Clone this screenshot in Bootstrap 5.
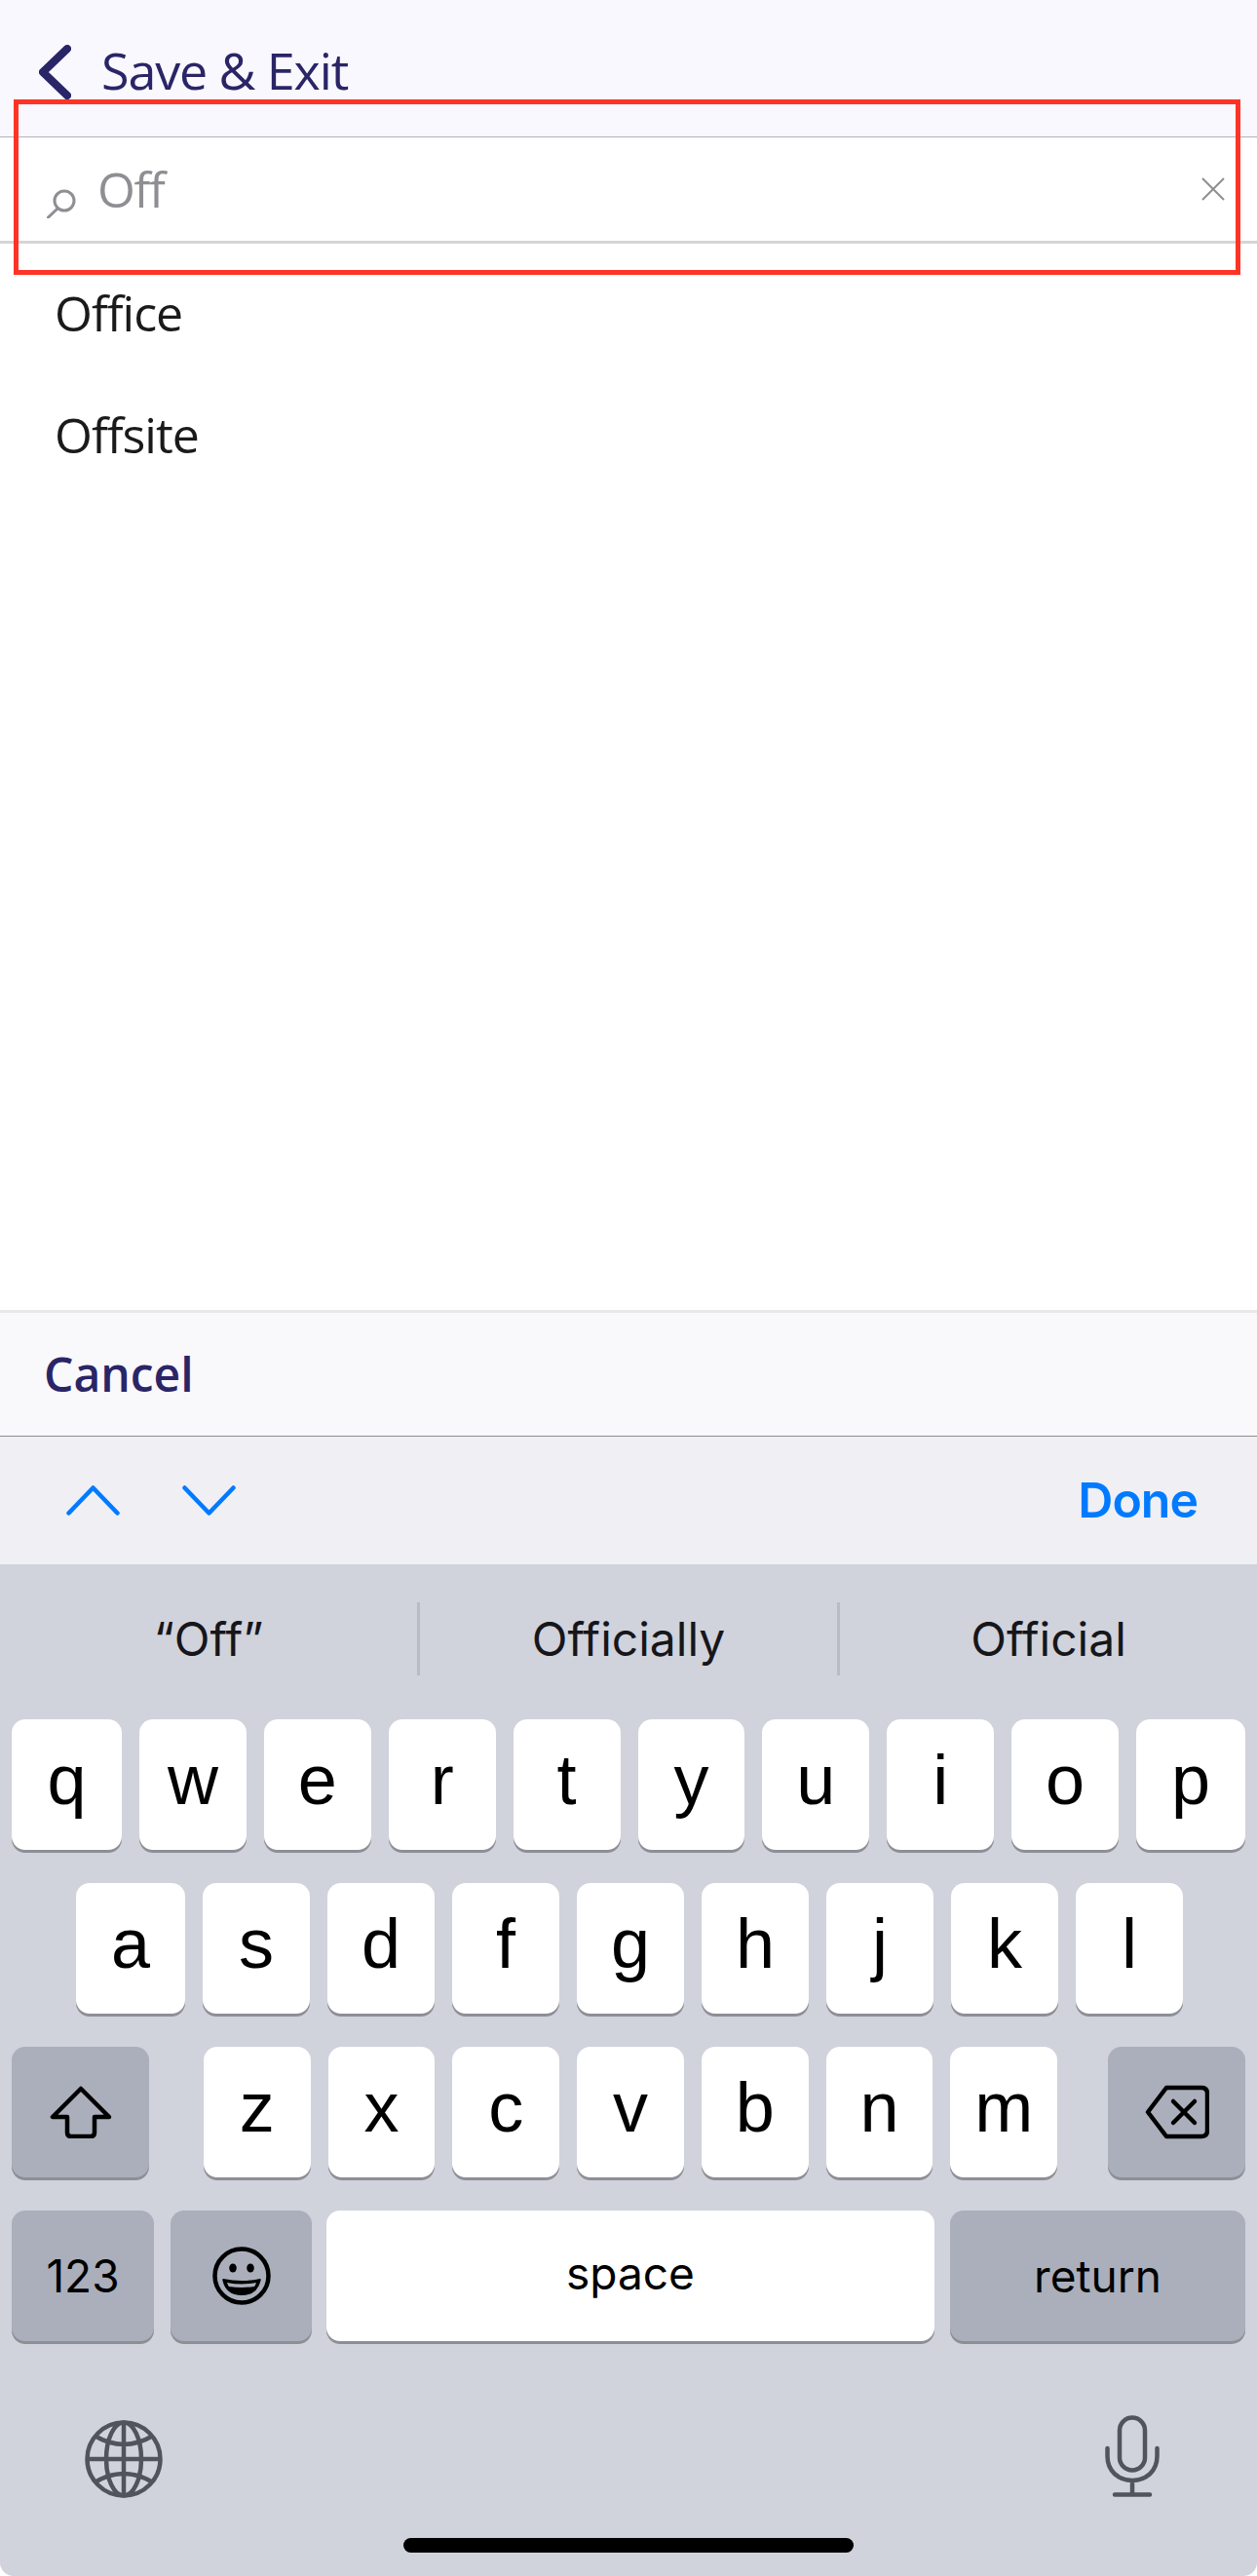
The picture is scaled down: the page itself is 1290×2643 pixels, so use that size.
<!DOCTYPE html>
<html lang="en">
  <head>
    <meta charset="UTF-8" />
    <meta name="viewport" content="width=device-width, initial-scale=1.0" />
    <title>Save &amp; Exit</title>
    <link href="https://cdn.jsdelivr.net/npm/bootstrap@5.3.0/dist/css/bootstrap.min.css" rel="stylesheet" />
    <style>
      body {
        width: 1290px;
        height: 2643px;
        background-color: #fff;
        font-family: "Open Sans", sans-serif;
        overflow: hidden;
      }
      .screen { height: 2643px; }
      .top-bar {
        height: 141px;
        padding: 46px 0 0 40px;
        background-color: #f8f8fe;
        border-bottom: 1px solid #b3b3b8;
        color: #2a2566;
      }
      .top-title { font-size: 52px; line-height: 52px; letter-spacing: -1.1px; margin-left: 31px; }
      .search-row {
        height: 109px;
        padding: 0 33px 0 48px;
        border-bottom: 3px solid #d5d5d5;
      }
      .search-text { font-size: 50px; line-height: 60px; letter-spacing: -1.3px; color: #8e8e93; margin-left: 22px; }
      .search-glass { margin-top: 30px; }
      .result-list { padding-top: 36px; }
      .result-item {
        border: 0;
        padding: 0 0 0 56px;
        height: 125px;
        font-size: 50px;
        line-height: 70px;
        letter-spacing: -1px;
        color: #1a1a1a;
      }
      .cancel-bar {
        height: 130px;
        background-color: #f9f8fb;
        border-top: 3px solid #e9e9e9;
        border-bottom: 1px solid #8e8e8e;
        padding-left: 45px;
      }
      .cancel-text { font-size: 48px; font-weight: 600; color: #2a2566; }
      .tool-bar {
        height: 131px;
        background-color: #efeff4;
        padding: 0 61px 0 68px;
      }
      .tool-arrows { gap: 64px; }
      .done-text { font-family: Inter, sans-serif; font-size: 50px; letter-spacing: -1px; font-weight: 600; color: #007aff; }
      .keyboard {
        height: 1038px;
        background-color: #d0d2dc;
        border-radius: 0 0 14px 14px;
        font-family: Inter, sans-serif;
        color: #000;
      }
      .suggest-bar { height: 159px; padding: 39px 0 45px; }
      .suggest-cell { flex: 1 1 0; font-size: 48px; line-height: 75px; color: #16161a; text-align: center; }
      .suggest-rule { width: 3px; background-color: #b9bcc6; }
      .key-rows { gap: 31px; padding: 0 12px; }
      .key-row { gap: 18px; height: 137px; }
      .key-row-inset { padding: 0 64px 0 66px; }
      .kb-key {
        flex: 1 1 0;
        height: 134px;
        border-radius: 14px;
        background-color: #fff;
        box-shadow: 0 3px 0 #8e8e96;
        font-family: "Liberation Sans", sans-serif;
        font-size: 72px;
        line-height: 1;
        padding-bottom: 10px;
      }
      .kb-key-dark { background-color: #aaafbb; }
      .key-first { flex: 0 0 113px; }
      .key-last { flex: 0 0 112px; }
      .key-first-inset { flex: 0 0 112px; }
      .key-wide { flex: 0 0 141px; }
      .key-letters { gap: 18px; padding: 0 34px 0 38px; }
      .key-word { font-family: Inter, sans-serif; font-size: 46px; padding-bottom: 0; }
      .key-num { flex: 0 0 146px; }
      .key-emoji { flex: 0 0 145px; margin: 0 -3px 0 -1px; }
      .key-space { flex: 1 1 0; padding-bottom: 6px; }
      .key-return { flex: 0 0 303px; margin-left: -2px; }
      .kb-bottom { height: 84px; padding: 0 100px 0 87px; margin-top: 73px; }
      .globe-icon { margin-top: 6px; }
      .home-bar {
        width: 462px;
        height: 15px;
        margin: 42px auto 0;
        border-radius: 8px;
        background-color: #000;
      }
      .red-box {
        position: absolute;
        left: 14px;
        top: 102px;
        width: 1259px;
        height: 180px;
        border: 5px solid #ff3426;
        pointer-events: none;
      }
    </style>
  </head>
  <body>
    <div class="screen position-relative d-flex flex-column">
      <div class="top-bar d-flex align-items-start">
        <svg width="33" height="56" viewBox="0 0 33 56" fill="none" stroke="#2a2566" stroke-width="8" stroke-linecap="round" stroke-linejoin="round">
          <path d="M29 4 4 28l25 24" />
        </svg>
        <div class="top-title">Save &amp; Exit</div>
      </div>

      <div class="search-row d-flex align-items-center">
        <svg class="search-glass" width="30" height="30" viewBox="0 0 30 30" fill="none" stroke="#8e8e93" stroke-width="3">
          <circle cx="18" cy="12" r="10" />
          <path d="M11 20 1.500 29" stroke-linecap="round" />
        </svg>
        <span class="search-text flex-grow-1">Off</span>
        <svg width="24" height="24" viewBox="0 0 24 24" fill="none" stroke="#8e8e93" stroke-width="2">
          <path d="M1 1l22 22M23 1 1 23" />
        </svg>
      </div>

      <ul class="list-group list-group-flush result-list flex-grow-1">
        <li class="list-group-item result-item">Office</li>
        <li class="list-group-item result-item">Offsite</li>
      </ul>

      <div class="cancel-bar d-flex align-items-center">
        <span class="cancel-text">Cancel</span>
      </div>

      <div class="tool-bar d-flex align-items-center justify-content-between">
        <div class="tool-arrows d-flex align-items-center">
          <svg width="55" height="31" viewBox="0 0 55 31" fill="none" stroke="#007aff" stroke-width="4.500" stroke-linecap="round" stroke-linejoin="round">
            <path d="M2.500 28.500 27.500 2.500l25 26" />
          </svg>
          <svg width="55" height="31" viewBox="0 0 55 31" fill="none" stroke="#007aff" stroke-width="4.500" stroke-linecap="round" stroke-linejoin="round">
            <path d="M2.500 2.500l25 26 25-26" />
          </svg>
        </div>
        <span class="done-text">Done</span>
      </div>

      <div class="keyboard">
        <div class="suggest-bar d-flex">
          <div class="suggest-cell">“Off”</div>
          <div class="suggest-rule"></div>
          <div class="suggest-cell">Officially</div>
          <div class="suggest-rule"></div>
          <div class="suggest-cell">Official</div>
        </div>

        <div class="key-rows d-flex flex-column">
          <div class="key-row d-flex">
            <div class="kb-key key-first d-flex align-items-center justify-content-center">q</div>
            <div class="kb-key d-flex align-items-center justify-content-center">w</div>
            <div class="kb-key d-flex align-items-center justify-content-center">e</div>
            <div class="kb-key d-flex align-items-center justify-content-center">r</div>
            <div class="kb-key d-flex align-items-center justify-content-center">t</div>
            <div class="kb-key d-flex align-items-center justify-content-center">y</div>
            <div class="kb-key d-flex align-items-center justify-content-center">u</div>
            <div class="kb-key d-flex align-items-center justify-content-center">i</div>
            <div class="kb-key d-flex align-items-center justify-content-center">o</div>
            <div class="kb-key key-last d-flex align-items-center justify-content-center">p</div>
          </div>
          <div class="key-row key-row-inset d-flex">
            <div class="kb-key key-first-inset d-flex align-items-center justify-content-center">a</div>
            <div class="kb-key d-flex align-items-center justify-content-center">s</div>
            <div class="kb-key d-flex align-items-center justify-content-center">d</div>
            <div class="kb-key d-flex align-items-center justify-content-center">f</div>
            <div class="kb-key d-flex align-items-center justify-content-center">g</div>
            <div class="kb-key d-flex align-items-center justify-content-center">h</div>
            <div class="kb-key d-flex align-items-center justify-content-center">j</div>
            <div class="kb-key d-flex align-items-center justify-content-center">k</div>
            <div class="kb-key d-flex align-items-center justify-content-center">l</div>
          </div>
          <div class="key-row d-flex">
            <div class="kb-key kb-key-dark key-wide d-flex align-items-center justify-content-center p-0">
              <svg width="64" height="54" viewBox="0 0 64 54" fill="none" stroke="#000" stroke-width="4.500" stroke-linejoin="round">
                <path d="M32 3 3 32h15v16q0 4 4 4h20q4 0 4-4V32h15z" />
              </svg>
            </div>
            <div class="key-letters d-flex flex-fill">
              <div class="kb-key d-flex align-items-center justify-content-center">z</div>
              <div class="kb-key d-flex align-items-center justify-content-center">x</div>
              <div class="kb-key d-flex align-items-center justify-content-center">c</div>
              <div class="kb-key d-flex align-items-center justify-content-center">v</div>
              <div class="kb-key d-flex align-items-center justify-content-center">b</div>
              <div class="kb-key d-flex align-items-center justify-content-center">n</div>
              <div class="kb-key d-flex align-items-center justify-content-center">m</div>
            </div>
            <div class="kb-key kb-key-dark key-wide d-flex align-items-center justify-content-center p-0">
              <svg width="66" height="56" viewBox="0 0 66 56" fill="none" stroke="#000" stroke-width="4.500" stroke-linejoin="round" stroke-linecap="round">
                <path d="M22 3h36q6 0 6 6v38q0 6-6 6H22L3 28z" />
                <path d="M29 17l22 22M51 17 29 39" />
              </svg>
            </div>
          </div>
          <div class="key-row d-flex">
            <div class="kb-key kb-key-dark key-word key-num d-flex align-items-center justify-content-center">123</div>
            <div class="kb-key kb-key-dark key-emoji d-flex align-items-center justify-content-center p-0">
              <svg width="60" height="60" viewBox="0 0 60 60">
                <circle cx="30" cy="30" r="27.500" fill="none" stroke="#000" stroke-width="4.500" />
                <ellipse cx="21" cy="22" rx="3.800" ry="4.600" />
                <ellipse cx="39" cy="22" rx="3.800" ry="4.600" />
                <path d="M11 33q19 4 38 0 1 0 .5 2Q46 50 30 50T10.500 35q-.5-2 .5-2z" />
                <path d="M15 37q15 3 30 0-1 3-2 4-13 2-26 0-1-1-2-4z" fill="#aaafbb" />
              </svg>
            </div>
            <div class="kb-key key-word key-space d-flex align-items-center justify-content-center">space</div>
            <div class="kb-key kb-key-dark key-word key-return d-flex align-items-center justify-content-center">return</div>
          </div>
        </div>

        <div class="kb-bottom d-flex align-items-center justify-content-between">
          <svg class="globe-icon" width="80" height="80" viewBox="0 0 80 80" fill="none" stroke="#50545e" stroke-width="4.500">
            <circle cx="40" cy="40" r="37.500" />
            <ellipse cx="40" cy="40" rx="18" ry="37.500" />
            <path d="M40 2.500v75M2.500 40h75M10 16q30 18 60 0M10 64q30-18 60 0" />
          </svg>
          <svg width="56" height="84" viewBox="0 0 56 84" fill="none" stroke="#50545e" stroke-width="4.500" stroke-linecap="round">
            <rect x="15" y="2.500" width="26" height="54" rx="13" />
            <path d="M2.500 34v8c0 15 11 25 25.500 25s25.500-10 25.500-25v-8M28 67v14M10 81.500h36" />
          </svg>
        </div>
        <div class="home-bar"></div>
      </div>

      <div class="red-box"></div>
    </div>

    <script src="https://cdn.jsdelivr.net/npm/bootstrap@5.3.0/dist/js/bootstrap.bundle.min.js"></script>
  </body>
</html>
